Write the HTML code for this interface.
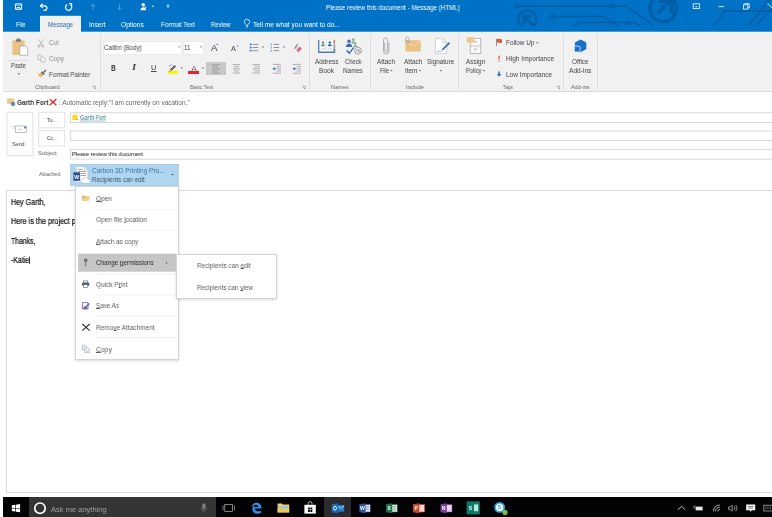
<!DOCTYPE html>
<html><head><meta charset="utf-8">
<style>
*{box-sizing:border-box;margin:0;padding:0}
html,body{width:772px;height:517px;overflow:hidden;background:#fff;font-family:"Liberation Sans",sans-serif}
.a{position:absolute}
.tx{position:absolute;will-change:transform;white-space:nowrap;line-height:1em;transform-origin:0 50%}
svg{position:absolute;left:0;top:0;overflow:hidden;will-change:transform}
.bx{position:absolute;background:#fff;border:1px solid #dcdcdc}
.sep{position:absolute;top:33px;width:1px;height:57px;background:#e1e1e1}
.ms{position:absolute;left:96px;width:80px;height:1px;background:#e6e6e6}
</style></head><body>
<!-- backgrounds -->
<div class="a" style="left:0;top:0;width:772px;height:32px;background:#0072c6"></div>
<svg width="772" height="100" viewBox="0 0 772 100"><rect x="0" y="31.7" width="772" height="59.3" fill="#f1f1f1"/><rect x="40" y="15.8" width="41" height="17" fill="#f1f1f1"/></svg>
<div class="a" style="left:0;top:91px;width:772px;height:1px;background:#dadada"></div>
<!-- ribbon separators -->
<div class="sep" style="left:100px"></div><div class="sep" style="left:309px"></div><div class="sep" style="left:370px"></div>
<div class="sep" style="left:458px"></div><div class="sep" style="left:563px"></div><div class="sep" style="left:597px"></div>
<div class="a" style="left:8px;top:60px;width:21px;height:1px;background:#dedede"></div>
<!-- font boxes -->
<div class="bx" style="left:103px;top:41px;width:79px;height:14px;border-color:#ececec"></div>
<div class="bx" style="left:183px;top:41px;width:21px;height:14px;border-color:#ececec"></div>
<div class="a" style="left:206px;top:62px;width:20px;height:13px;background:#c8c8c8"></div>
<div class="a" style="left:167.5px;top:71.4px;width:10.5px;height:2.6px;background:#fff100"></div>
<div class="a" style="left:188.2px;top:71.4px;width:11.3px;height:2.3px;background:#e3262d"></div>
<!-- compose header boxes -->
<svg width="772" height="200" viewBox="0 0 772 200"><g fill="#fff" stroke="#e2e2e2" stroke-width="1">
<rect x="6.9" y="112.3" width="26" height="43.4"/><rect x="38.7" y="112.3" width="26" height="15.5"/><rect x="38.7" y="130.5" width="26" height="15.5"/></g>
<g fill="#fff" stroke="#d8d8d8" stroke-width="1"><rect x="70.5" y="112.8" width="710" height="9.7"/><rect x="70.5" y="131" width="710" height="9.7"/><rect x="70.5" y="149.4" width="710" height="9.7"/></g></svg>
<div class="a" style="left:70px;top:164px;width:109px;height:22px;background:#b0d5ee;border-top:1px solid #a4cbe8"></div>
<!-- body -->
<div class="a" style="left:6px;top:190px;width:780px;height:303px;border:1px solid #dcdcdc;background:#fff"></div>
<svg width="772" height="300" viewBox="0 0 772 300"><rect x="29.2" y="256.6" width=".8" height="7.4" fill="#111"/></svg>

<svg width="772" height="517" viewBox="0 0 772 517">
<!-- title decoration, clipped to y<26 -->
<clipPath id="tc"><rect x="0" y="0" width="772" height="26"/></clipPath>
<g clip-path="url(#tc)" fill="none" stroke="#005fa9" stroke-width="1.8">
  <circle cx="517" cy="6" r="1.6"/><path d="M518.7 6H610.7"/><circle cx="612.4" cy="6" r="1.6"/><path d="M614.1 6H626l28.5 20"/>
  <circle cx="552.5" cy="16.3" r="1.6"/><path d="M554.2 16.3H604l14.3 10"/>
  <path d="M573 26.5l7-4.1h46.8"/><circle cx="628.5" cy="22.4" r="1.6"/><path d="M630.2 22.4h4l6 4.2"/>
  <path d="M713 27l12-16H772"/><path d="M747.5 27L770 -1"/><path d="M755.5 27L774 5.5"/>
  <circle cx="527.3" cy="19.5" r="9.2" stroke-width="2.6"/><path d="M533 25.2l-8.6-8.6m-.3 7.3v-7.6h7.6" stroke-width="2.9"/>
  <circle cx="663.2" cy="8.3" r="13.2" stroke-width="3.6"/><path d="M657.5 13.7l12-12m-10.5-.7h12.5v12.5" stroke-width="4"/>
</g>
<!-- QAT -->
<g fill="none" stroke="#fff" stroke-width="1" transform="translate(0,.5)">
  <path d="M15.4 3.4h6.2v5.4h-6.2z"/><path d="M17 8.8v-1.8h3v1.8" stroke-width=".9"/><path d="M16.5 3.4v1.6h4v-1.6" stroke-width=".6" stroke="#cfe3f5"/>
  <path d="M40.6 5.3h4a2.3 2.3 0 0 1 0 4.6h-1.2" stroke-width="1.2"/><path d="M42.7 3.2l-2.2 2.1 2.2 2.1" stroke-width="1.2"/>
  <path d="M70.5 4.3a3.1 3.1 0 1 1-3.2-.3" stroke-width="1.250"/><path d="M69 3.1h2.6v2.6" stroke-width="1.1"/>
</g>
<g fill="none" stroke="#4a9bdc" stroke-width="1" transform="translate(0,.5)">
  <path d="M93 9.5v-6m-2.3 2.3l2.3-2.3 2.3 2.3"/>
  <path d="M119.5 3.5v6m-2.3-2.3l2.3 2.3 2.3-2.3"/>
</g>
<g fill="#fff" transform="translate(0,.5)">
  <circle cx="143.2" cy="4.2" r="1.7"/><path d="M140.5 9.8c0-4 5.6-4 5.6 0z"/><path d="M144.5 5.5l1.8 1.2-.6 1.6z"/>
  <path d="M151.8 5.3h2.4l-1.2 1.4z"/>
  <rect x="166.6" y="4.3" width="2.8" height=".8"/><path d="M166.6 5.9h2.8l-1.4 1.5z"/>
</g>
<!-- lightbulb -->
<g fill="none" stroke="#fff" stroke-width=".75"><path d="M246.3 26v-1.3c-1.5-1-1.9-2-1.9-2.9a2.6 2.6 0 0 1 5.2 0c0 .9-.4 1.9-1.9 2.9v1.3z"/><path d="M246.3 27.2h1.4"/></g>
<!-- window controls -->
<g fill="none" stroke="#fff" stroke-width=".8">
  <rect x="693.2" y="3.8" width="6.2" height="4.8"/><path d="M695.3 7l1-1 1 1m-1-1v1.6" stroke-width=".6"/>
  <path d="M718.4 6.6h5.6"/>
  <rect x="743.4" y="4.8" width="4.4" height="4.3"/><path d="M744.8 4.8v-1.2h4.4v4.3h-1.4"/>
  <path d="M767.5 3.4l6 6.2"/>
</g>

<!-- ============ ribbon icons ============ -->
<!-- paste -->
<rect x="12.3" y="40.5" width="12.3" height="14.5" rx=".8" fill="#eac282"/>
<rect x="15.8" y="39.3" width="5.3" height="2.4" rx=".6" fill="#7a7a7a"/><rect x="17.5" y="38.3" width="1.9" height="1.6" fill="#7a7a7a"/>
<path d="M19.8 46h5.6l2.4 2.4v6.8h-8z" fill="#fff" stroke="#8f8f8f" stroke-width=".6"/>
<path d="M17.4 73.2h2.8l-1.4 1.6z" fill="#666"/>
<!-- cut (scissors) -->
<g fill="none" stroke="#a6a6a6" stroke-width=".7"><path d="M38.6 39.4l3.6 5.8M43.4 39.4l-3.6 5.8"/><circle cx="39.1" cy="46.1" r="1.1"/><circle cx="42.9" cy="46.1" r="1.1"/></g>
<!-- copy -->
<g fill="#f1f1f1" stroke="#a9a9a9" stroke-width=".6"><path d="M38 54.8h2.6l1.2 1.2v3.6H38z"/><path d="M40.8 57h2.8l1.4 1.4v3.8h-4.2z"/></g>
<!-- format painter -->
<g transform="translate(0,2.4)"><path d="M38 72.2l3.4-2.6 2.2 2.8-3.4 2.8z" fill="#e8b65c"/><path d="M41.2 69.8l1.2-1 2.3 2.9-1.2 1z" fill="#555"/><path d="M43.4 69.4l2.2-2.4 .8.7-1.8 2.6z" fill="#555"/></g>
<g transform="translate(2.8,0)"><path d="M89.5 86.2h3v3" fill="none" stroke="#888" stroke-width=".6"/><path d="M90.4 87.2l2 2" stroke="#888" stroke-width=".6"/></g>
<!-- font dropdown arrows -->
<g fill="#666"><path d="M178 46.4h2.4l-1.2 1.4z"/><path d="M199.8 46.4h2.4l-1.2 1.4z"/>
<path d="M180.6 67.6h2.2l-1.1 1.3z"/><path d="M202 67.6h2.2l-1.1 1.3z"/>
<path d="M262 46.6h2.2l-1.1 1.3z"/><path d="M283 46.6h2.2l-1.1 1.3z"/></g>
<!-- grow/shrink marks -->
<path d="M217.2 43.6l1 1.4h-2z" fill="#2f6fb5"/><path d="M236.6 45.4h2l-1 1.3z" fill="#2f6fb5"/>
<!-- highlighter pen -->
<g><path d="M169.8 69.5l4.8-4.5 1.5 1.5-4.6 4.6z" fill="#666"/><path d="M168.8 66.3l3-1.6" stroke="#888" stroke-width=".8"/><path d="M169.2 70.2l1.7 1.2h-2.2z" fill="#777"/></g>
<!-- bullets -->
<g fill="#2f6fb5"><rect x="249.8" y="43.6" width="1.8" height="1.6"/><rect x="249.8" y="46.7" width="1.8" height="1.6"/><rect x="249.8" y="49.8" width="1.8" height="1.6"/></g>
<g stroke="#777" stroke-width=".8"><path d="M252.8 44.4h5.4M252.8 47.5h5.4M252.8 50.6h5.4"/></g>
<!-- numbering -->
<g stroke="#2f6fb5" stroke-width=".7"><path d="M271.2 43.4v2M271.2 46.6v2M271.2 49.8v2"/></g>
<g stroke="#777" stroke-width=".8"><path d="M273.6 44.4h5.6M273.6 47.5h5.6M273.6 50.6h5.6"/></g>
<!-- clear formatting -->
<g><path d="M294.5 49.2l2.5-5 1 .3" fill="none" stroke="#666" stroke-width=".8"/><path d="M296.3 50.3l3.5-3.7 2 1.9-3.5 3.7z" fill="#ee5a78"/><path d="M295.5 47h2.4" stroke="#666" stroke-width=".6"/></g>
<!-- align icons -->
<g stroke="#8a8a8a" stroke-width=".65">
 <path d="M212 64.6h8M212 66.7h6M212 68.8h8M212 70.9h6M212 73h8"/>
 <path d="M232.7 64.6h7.4M233.9 66.7h5M232.7 68.8h7.4M233.9 70.9h5M232.7 73h7.4"/>
 <path d="M252.4 64.6h7.6M254.4 66.7h5.6M252.4 68.8h7.6M254.4 70.9h5.6M252.4 73h7.6"/>
 <path d="M272.8 64.4h8.2M276.6 66.6h4.4M276.6 68.8h4.4M276.6 71h4.4M272.8 73.2h8.2"/>
 <path d="M292.8 64.4h8.2M296.6 66.6h4.4M296.6 68.8h4.4M296.6 71h4.4M292.8 73.2h8.2"/>
</g>
<g fill="#2f6fb5"><path d="M272.6 68.8l2-1.7v3.4z"/><rect x="274.3" y="68.3" width="1.7" height="1"/><path d="M296 68.8l-2-1.7v3.4z"/><rect x="292.6" y="68.3" width="1.7" height="1"/></g>
<path d="M302.3 86.2h3v3" fill="none" stroke="#888" stroke-width=".6"/><path d="M303.2 87.2l2 2" stroke="#888" stroke-width=".6"/>
<path d="M556.5 86.2h3v3" fill="none" stroke="#888" stroke-width=".6"/><path d="M557.4 87.2l2 2" stroke="#888" stroke-width=".6"/>
<!-- address book -->
<g><path d="M318.1 40.1h1.5v11.2h15.6v1.6h-17.1z" fill="#4a76b0"/>
 <path d="M319.6 40.2c2.4-1.3 4.9-1.3 6.9 0 2-1.3 4.5-1.3 6.9 0v11.1h-13.8z" fill="#fdfdfd" stroke="#cfd6de" stroke-width=".4"/>
 <path d="M326.5 40.2v11.1" stroke="#b9c4d2" stroke-width=".5"/>
 <rect x="333.5" y="40.3" width="1.7" height="3.1" fill="#d9705a"/><rect x="333.5" y="44.2" width="1.7" height="5" fill="#8faa9a"/><rect x="333.5" y="49.2" width="1.7" height="2.1" fill="#4a76b0"/>
 <circle cx="323" cy="42.6" r="1.250" fill="#5a9a78"/><path d="M321 46.2c0-2.9 4-2.9 4 0z" fill="#5a9a78"/><circle cx="329.8" cy="42.6" r="1.250" fill="#3a6cae"/><path d="M327.8 46.2c0-2.9 4-2.9 4 0z" fill="#3a6cae"/>
 <rect x="321.3" y="48.3" width="3.6" height="1.3" fill="#d6d6d6"/><rect x="328.1" y="48.3" width="3.6" height="1.3" fill="#d6d6d6"/></g>
<!-- check names -->
<g><circle cx="353.3" cy="39.7" r="1.350" fill="#7fb092"/><path d="M351.2 43.6c0-3 4.2-3 4.2 0z" fill="#7fb092"/><circle cx="355.4" cy="43.7" r="1.150" fill="#7fb092"/><path d="M353.6 47c0-2.7 3.7-2.7 3.7 0z" fill="#7fb092"/>
 <circle cx="349" cy="41.3" r="1.7" fill="#3a6cae"/><path d="M345.9 47.1c0-4.8 6.3-4.8 6.3 0z" fill="#3a6cae"/>
 <path d="M346.6 50.2l2.7 3 4.5-5.8" fill="none" stroke="#2f6cb0" stroke-width="1.3"/>
 <circle cx="358" cy="50.7" r="3.4" fill="none" stroke="#777" stroke-width=".65"/><circle cx="357.8" cy="50.7" r="1.250" fill="none" stroke="#777" stroke-width=".55"/><path d="M359.1 49.5v2c.5.8 1.4.5 1.5-.5" fill="none" stroke="#777" stroke-width=".5"/></g>
<!-- paperclip -->
<path d="M384.3 43v7.6a1.7 1.7 0 0 0 3.4 0V40.8a2.5 2.5 0 0 0-5 0v10.4a3.3 3.3 0 0 0 6.6 0V43" fill="none" stroke="#9a9a9a" stroke-width=".85" transform="translate(69.7,-.4) scale(.82,1)"/>
<!-- attach item envelope -->
<g><rect x="405.4" y="40.3" width="15.3" height="11.3" fill="#eac282"/><path d="M405.4 40.5l7.650 5.8 7.650-5.8" fill="none" stroke="#f7e3bf" stroke-width=".8"/>
 <path d="M407 40v2a1 1 0 0 0 2 0v-3.4a1.6 1.6 0 0 0-3.2 0v4" fill="none" stroke="#8a8a8a" stroke-width=".6"/></g>
<!-- signature -->
<g><path d="M435.4 38.6h7.4l4 4v10.8h-11.4z" fill="#fff" stroke="#c0c0c0" stroke-width=".7"/><path d="M442.8 38.6v4h4" fill="none" stroke="#c0c0c0" stroke-width=".7"/>
 <path d="M437 51.2h5" stroke="#3b6fb0" stroke-width=".5"/><path d="M441.6 50.6l.8-2.2 6.4-6.4 1.4 1.4-6.4 6.4z" fill="#4678b4"/></g>
<path d="M439.8 70h2.3l-1.150 1.4z" fill="#666"/>
<path d="M390.3 70h2.3l-1.150 1.4z" fill="#666"/><path d="M418.8 70h2.3l-1.150 1.4z" fill="#666"/><path d="M483 70h2.3l-1.150 1.4z" fill="#666"/><path d="M536 42.3h2.3l-1.150 1.4z" fill="#666"/>
<!-- assign policy -->
<g><rect x="470.2" y="38.4" width="10.6" height="15" fill="#fafafa" stroke="#9d9d9d" stroke-width=".7"/><path d="M470.2 46h10.6M473.9 41.4h3.2M475.5 41.4v1.5M473.9 49h3.2M475.5 49v1.5" fill="none" stroke="#9d9d9d" stroke-width=".6"/>
 <rect x="466.7" y="37.3" width="7.3" height="5.2" fill="#eac282"/><path d="M466.7 37.5l3.650 2.8 3.650-2.8" fill="none" stroke="#f7e3bf" stroke-width=".6"/></g>
<!-- flag / importance -->
<path d="M496.5 38.8v7.4" stroke="#7a7a7a" stroke-width=".8"/><path d="M497 39c2-.8 3 .8 5 0v3.8c-2 .8-3-.8-5 0z" fill="#dc5a3a"/>
<path d="M498.4 55.8h1.3l-.25 4.3h-.8z" fill="#e0492e"/><rect x="498.5" y="60.8" width="1.1" height="1.1" fill="#e0492e"/>
<path d="M498.3 71.4h1.6v2.6h1.5l-2.3 2.7-2.3-2.7h1.5z" fill="#2f6fb5"/>
<!-- office add-ins -->
<g><path d="M580.6 39.4l5.7 3.2v6.4l-5.7 3.2-5.7-3.2v-6.4z" fill="#1470c8"/><rect x="574.3" y="46.2" width="5.8" height="5.8" rx="1.2" fill="#1470c8" stroke="#f1f1f1" stroke-width=".8"/></g>

<!-- ============ header icons ============ -->
<g><rect x="7.2" y="98.4" width="7.2" height="5.4" fill="#eac282"/><path d="M7.2 98.6l3.6 2.7 3.6-2.7" fill="none" stroke="#f7e3bf" stroke-width=".6"/><circle cx="13" cy="104" r="2" fill="#2f6fb5"/><circle cx="13" cy="104" r=".7" fill="#cfe0f3"/></g>
<path d="M49.8 99.2l6.6 6M56.4 99l-6.8 6.3" stroke="#e21c1c" stroke-width="1.2" fill="none"/>
<!-- send icon -->
<g><rect x="15.4" y="126" width="11.2" height="6.6" fill="#fff" stroke="#9a9a9a" stroke-width=".6"/><path d="M12.4 126.6h2.4M13 128.2h1.8" stroke="#9a9a9a" stroke-width=".5"/><path d="M18 129.4h4" stroke="#9a9a9a" stroke-width=".5"/><rect x="24.2" y="126.6" width="1.8" height="1.8" fill="#2f6fb5"/></g>
<!-- attachment icon -->
<g><path d="M76.2 166.5h7.8l3.8 3.8v12h-11.6z" fill="#fff" stroke="#a9b4c0" stroke-width=".5"/><path d="M84 166.5v3.8h3.8" fill="none" stroke="#a9b4c0" stroke-width=".5"/>
 <path d="M77.6 169.4h5.2M77.6 171.5h8.4M80.5 173.5h5.5M80.5 175.5h5.5" stroke="#7c7c7c" stroke-width=".7"/>
 <rect x="73.4" y="172.3" width="6.7" height="8.5" fill="#2b4f8e"/>
 <path d="M82.8 183.3a1.9 1.9 0 0 1 .1-3.8 2.6 2.6 0 0 1 5-.5 2.150 2.150 0 0 1 .5 4.3z" fill="#fff" stroke="#8aa6c8" stroke-width=".45"/></g>
<text x="74.2" y="178.7" font-family="Liberation Sans,sans-serif" font-size="5.2" font-weight="bold" fill="#fff">W</text>
<path d="M171.3 174h2.4l-1.2 1.4z" fill="#444"/>

<path d="M79.6 121H105.3" stroke="#2a7a90" stroke-width=".45"/>
<rect x="72.3" y="114.8" width="5.2" height="5.1" rx=".5" fill="#ffd727"/><circle cx="77" cy="119.3" r=".6" fill="#a060b0"/>

</svg>

<div class="tx" style='left:15.50px;top:21.68px;font-size:6.60px;color:#fff;transform:scaleX(0.894);'>File</div>
<div class="tx" style='left:47.80px;top:21.68px;font-size:6.60px;color:#2b6cb0;transform:scaleX(0.942);'>Message</div>
<div class="tx" style='left:89.30px;top:21.68px;font-size:6.60px;color:#fff;transform:scaleX(0.982);'>Insert</div>
<div class="tx" style='left:121.30px;top:21.68px;font-size:6.60px;color:#fff;'>Options</div>
<div class="tx" style='left:160.50px;top:21.68px;font-size:6.60px;color:#fff;transform:scaleX(0.980);'>Format Text</div>
<div class="tx" style='left:210.50px;top:21.68px;font-size:6.60px;color:#fff;transform:scaleX(0.892);'>Review</div>
<div class="tx" style='left:252.80px;top:21.68px;font-size:6.60px;color:#fff;'>Tell me what you want to do...</div>
<div class="tx" style='left:326.00px;top:4.53px;font-size:6.60px;color:#fff;transform:scaleX(0.952);'>Please review this document - Message (HTML)</div>
<div class="tx" style='left:11.40px;top:62.95px;font-size:6.40px;color:#444;transform:scaleX(0.912);'>Paste</div>
<div class="tx" style='left:49.00px;top:40.05px;font-size:6.40px;color:#8c8c8c;transform:scaleX(0.954);'>Cut</div>
<div class="tx" style='left:49.00px;top:56.05px;font-size:6.40px;color:#8c8c8c;'>Copy</div>
<div class="tx" style='left:49.00px;top:71.65px;font-size:6.40px;color:#444;transform:scaleX(0.970);'>Format Painter</div>
<div class="tx" style='left:35.00px;top:85.44px;font-size:5.90px;color:#666;transform:scaleX(0.975);'>Clipboard</div>
<div class="tx" style='left:104.00px;top:45.25px;font-size:6.40px;color:#444;transform:scaleX(0.979);'>Calibri (Body)</div>
<div class="tx" style='left:184.30px;top:45.25px;font-size:6.40px;color:#444;'>11</div>
<div class="tx" style='left:110.80px;top:63.67px;font-size:8.40px;color:#444;font-weight:bold;transform:scaleX(0.775);'>B</div>
<div class="tx" style='left:131.60px;top:64.09px;font-size:8.20px;color:#444;font-weight:bold;font-family:"Liberation Serif",serif;font-style:italic;transform:scaleX(1.318);'>I</div>
<div class="tx" style='left:150.70px;top:63.74px;font-size:7.60px;color:#444;text-decoration:underline;text-decoration-thickness:.7px;text-underline-offset:1px;transform:scaleX(0.966);'>U</div>
<div class="tx" style='left:190.80px;top:65.07px;font-size:8.40px;color:#555;transform:scaleX(1.108);'>A</div>
<div class="tx" style='left:210.60px;top:43.25px;font-size:9.80px;color:#444;transform:scaleX(0.932);'>A</div>
<div class="tx" style='left:231.40px;top:45.06px;font-size:7.40px;color:#444;transform:scaleX(0.932);'>A</div>
<div class="tx" style='left:189.50px;top:85.44px;font-size:5.90px;color:#666;transform:scaleX(0.864);'>Basic Text</div>
<div class="tx" style='left:315.00px;top:59.35px;font-size:6.40px;color:#444;'>Address</div>
<div class="tx" style='left:319.00px;top:67.65px;font-size:6.40px;color:#444;transform:scaleX(1.029);'>Book</div>
<div class="tx" style='left:345.00px;top:59.35px;font-size:6.40px;color:#444;transform:scaleX(0.910);'>Check</div>
<div class="tx" style='left:343.40px;top:67.65px;font-size:6.40px;color:#444;transform:scaleX(0.968);'>Names</div>
<div class="tx" style='left:331.00px;top:85.44px;font-size:5.90px;color:#666;transform:scaleX(0.943);'>Names</div>
<div class="tx" style='left:377.00px;top:59.35px;font-size:6.40px;color:#444;'>Attach</div>
<div class="tx" style='left:379.50px;top:67.65px;font-size:6.40px;color:#444;transform:scaleX(0.873);'>File</div>
<div class="tx" style='left:403.60px;top:59.35px;font-size:6.40px;color:#444;transform:scaleX(1.015);'>Attach</div>
<div class="tx" style='left:404.50px;top:67.65px;font-size:6.40px;color:#444;transform:scaleX(0.965);'>Item</div>
<div class="tx" style='left:427.40px;top:59.35px;font-size:6.40px;color:#444;'>Signature</div>
<div class="tx" style='left:406.20px;top:85.44px;font-size:5.90px;color:#666;transform:scaleX(0.937);'>Include</div>
<div class="tx" style='left:466.00px;top:59.35px;font-size:6.40px;color:#444;'>Assign</div>
<div class="tx" style='left:465.60px;top:67.65px;font-size:6.40px;color:#444;transform:scaleX(0.903);'>Policy</div>
<div class="tx" style='left:505.80px;top:40.05px;font-size:6.40px;color:#444;'>Follow Up</div>
<div class="tx" style='left:505.80px;top:56.05px;font-size:6.40px;color:#444;transform:scaleX(1.028);'>High Importance</div>
<div class="tx" style='left:505.80px;top:71.65px;font-size:6.40px;color:#444;transform:scaleX(1.016);'>Low Importance</div>
<div class="tx" style='left:502.70px;top:85.44px;font-size:5.90px;color:#666;transform:scaleX(0.795);'>Tags</div>
<div class="tx" style='left:572.00px;top:59.35px;font-size:6.40px;color:#444;'>Office</div>
<div class="tx" style='left:569.00px;top:67.65px;font-size:6.40px;color:#444;transform:scaleX(1.034);'>Add-ins</div>
<div class="tx" style='left:571.00px;top:85.44px;font-size:5.90px;color:#666;transform:scaleX(0.936);'>Add-ins</div>
<div class="tx" style='left:17.20px;top:98.52px;font-size:7.30px;color:#333;font-weight:bold;transform:scaleX(0.880);'>Garth Fort</div>
<div class="tx" style='left:59.00px;top:99.89px;font-size:6.50px;color:#666;'>: Automatic reply:"I am currently on vacation."</div>
<div class="tx" style='left:12.30px;top:140.76px;font-size:6.20px;color:#444;transform:scaleX(0.872);'>Send</div>
<div class="tx" style='left:47.30px;top:118.20px;font-size:5.80px;color:#333;transform:scaleX(0.884);'>To...</div>
<div class="tx" style='left:47.30px;top:136.40px;font-size:5.80px;color:#333;transform:scaleX(0.814);'>Cc...</div>
<div class="tx" style='left:38.20px;top:151.44px;font-size:5.90px;color:#666;transform:scaleX(0.956);'>Subject</div>
<div class="tx" style='left:39.00px;top:172.46px;font-size:5.70px;color:#666;transform:scaleX(0.962);'>Attached</div>
<div class="tx" style='left:79.60px;top:114.56px;font-size:6.90px;color:#2a7a90;transform:scaleX(0.818);'>Garth Fort</div>
<div class="tx" style='left:72.00px;top:151.94px;font-size:5.90px;color:#111;transform:scaleX(0.950);'>Please review this document</div>
<div class="tx" style='left:91.70px;top:168.49px;font-size:6.50px;color:#3675b2;'>Carbon 3D Printing Pro...</div>
<div class="tx" style='left:91.70px;top:177.39px;font-size:6.50px;color:#38567a;transform:scaleX(0.961);'>Recipients can edit</div>
<div class="tx" style='left:10.80px;top:197.67px;font-size:8.30px;color:#111;-webkit-text-stroke:.22px #111;transform:scaleX(0.857);'>Hey Garth,</div>
<div class="tx" style='left:10.80px;top:216.67px;font-size:8.30px;color:#111;-webkit-text-stroke:.22px #111;transform:scaleX(0.871);'>Here is the project p</div>
<div class="tx" style='left:10.80px;top:236.57px;font-size:8.30px;color:#111;-webkit-text-stroke:.22px #111;transform:scaleX(0.827);'>Thanks,</div>
<div class="tx" style='left:10.80px;top:255.87px;font-size:8.30px;color:#111;-webkit-text-stroke:.22px #111;transform:scaleX(0.835);'>-Katie</div>

<!-- menus -->
<div class="a" style="left:75px;top:186px;width:104px;height:174px;background:#fff;border:1px solid #d4d4d4;box-shadow:0 1px 2.5px rgba(0,0,0,.16)"></div>
<div class="a" style="left:176px;top:254px;width:101px;height:45px;background:#fff;border:1px solid #d4d4d4;box-shadow:0 1px 2.5px rgba(0,0,0,.16)"></div>
<svg width="772" height="517" viewBox="0 0 772 517"><rect x="78.1" y="253.6" width="97.9" height="18.1" fill="#c6c6c6"/>
<g stroke-width="1"><path stroke="#f7f7f7" d="M96 209.6h80M96 230.5h80"/><path stroke="#efefef" d="M96 274h80M96 295h80M96 316.2h80M96 337.5h80"/></g></svg>
<svg width="772" height="517" viewBox="0 0 772 517">
<!-- open folder -->
<path d="M82.2 201v-5.2h2.6l.8.9h3.4v1" fill="#e8b65c" stroke="#e8b65c" stroke-width=".3"/><path d="M82.2 201l1.6-3.4h6.4l-1.6 3.4z" fill="#f2cf8a"/>
<!-- key/pin -->
<circle cx="85.7" cy="260.3" r="1.7" fill="#555"/><circle cx="85.7" cy="260.1" r=".6" fill="#c6c6c6"/><path d="M85.7 261.5v5" stroke="#555" stroke-width=".8" fill="none"/>
<path d="M166 261.7l1.4 1.2-1.4 1.2z" fill="#555"/>
<!-- printer -->
<g><rect x="83.6" y="280.9" width="4.2" height="2" fill="#fff" stroke="#5a6a7a" stroke-width=".6"/><rect x="82.1" y="282.8" width="7.2" height="3" rx=".6" fill="#4a5a6c"/><rect x="83.6" y="284.8" width="4.2" height="2.6" fill="#fff" stroke="#5a6a7a" stroke-width=".6"/></g>
<!-- save as -->
<g><path d="M82.4 302.6h5.6v6.4h-5.6z" fill="#fff" stroke="#7a4fa0" stroke-width=".8"/><rect x="83.6" y="306.4" width="3.2" height="2.6" fill="#7a4fa0"/><path d="M85.4 306.8l3.4-3.8 1 1-3.4 3.8-1.4.4z" fill="#3b78c2"/></g>
<!-- remove X -->
<path d="M82.3 324l7.4 6.6M89.7 324l-7.4 6.6" stroke="#333" stroke-width="1.150" fill="none"/>
<!-- copy -->
<g fill="#fff" stroke="#8a9ab0" stroke-width=".6"><path d="M82.4 345.2h2.8l1.2 1.2v3.6h-4z"/><path d="M85 347.8h2.8l1.4 1.4v3.4H85z"/></g>
<path d="M83.2 347.4h2M83.2 348.8h1.4M86 350.2h2.2M86 351.6h2.2" stroke="#8a9ab0" stroke-width=".4"/>

</svg>
<div class="tx" style='left:96.10px;top:195.03px;font-size:7.30px;color:#5e5e5e;text-decoration-thickness:.5px;text-underline-offset:.3px;text-decoration-color:rgba(90,90,90,.55);transform:scaleX(0.890);'><u>O</u>pen</div>
<div class="tx" style='left:96.10px;top:216.13px;font-size:7.30px;color:#5e5e5e;text-decoration-thickness:.5px;text-underline-offset:.3px;text-decoration-color:rgba(90,90,90,.55);transform:scaleX(0.903);'>Open file <u>l</u>ocation</div>
<div class="tx" style='left:96.10px;top:237.73px;font-size:7.30px;color:#5e5e5e;text-decoration-thickness:.5px;text-underline-offset:.3px;text-decoration-color:rgba(90,90,90,.55);transform:scaleX(0.881);'><u>A</u>ttach as copy</div>
<div class="tx" style='left:96.10px;top:259.43px;font-size:7.30px;color:#2a2a2a;text-decoration-thickness:.5px;text-underline-offset:.3px;text-decoration-color:rgba(90,90,90,.55);transform:scaleX(0.867);'>Change <u>p</u>ermissions</div>
<div class="tx" style='left:96.00px;top:281.33px;font-size:7.30px;color:#5e5e5e;text-decoration-thickness:.5px;text-underline-offset:.3px;text-decoration-color:rgba(90,90,90,.55);transform:scaleX(0.885);'>Quick P<u>r</u>int</div>
<div class="tx" style='left:96.00px;top:302.43px;font-size:7.30px;color:#5e5e5e;text-decoration-thickness:.5px;text-underline-offset:.3px;text-decoration-color:rgba(90,90,90,.55);transform:scaleX(0.859);'><u>S</u>ave As</div>
<div class="tx" style='left:96.00px;top:324.23px;font-size:7.30px;color:#5e5e5e;text-decoration-thickness:.5px;text-underline-offset:.3px;text-decoration-color:rgba(90,90,90,.55);transform:scaleX(0.892);'>Remo<u>v</u>e Attachment</div>
<div class="tx" style='left:96.00px;top:346.03px;font-size:7.30px;color:#5e5e5e;text-decoration-thickness:.5px;text-underline-offset:.3px;text-decoration-color:rgba(90,90,90,.55);transform:scaleX(0.933);'><u>C</u>opy</div>
<div class="tx" style='left:196.60px;top:262.43px;font-size:7.30px;color:#5e5e5e;text-decoration-thickness:.5px;text-underline-offset:.3px;text-decoration-color:rgba(90,90,90,.55);transform:scaleX(0.872);'>Recipients can <u>e</u>dit</div>
<div class="tx" style='left:196.60px;top:283.83px;font-size:7.30px;color:#5e5e5e;text-decoration-thickness:.5px;text-underline-offset:.3px;text-decoration-color:rgba(90,90,90,.55);transform:scaleX(0.865);'>Recipients can <u>v</u>iew</div>

<!-- taskbar -->
<div class="a" style="left:0;top:497px;width:772px;height:20px;background:#030306"></div>
<div class="a" style="left:29px;top:497px;width:187px;height:20px;background:#343434"></div>
<div class="a" style="left:324px;top:497px;width:27px;height:20px;background:#2b2b2e"></div>
<svg width="772" height="517" viewBox="0 0 772 517">
<!-- windows logo -->
<g fill="#fff" transform="translate(0,-.4)"><path d="M11.8 505.7l3.4-.5v3.1h-3.4zM15.8 505.1l4.3-.6v3.8h-4.3zM11.8 508.9h3.4v3.1l-3.4-.5zM15.8 508.9h4.3v3.8l-4.3-.6z"/></g>
<!-- cortana -->
<circle cx="40" cy="508.2" r="5.2" fill="none" stroke="#fff" stroke-width="1.7"/>
<!-- mic -->
<g fill="none" stroke="#808080" stroke-width=".7"><rect x="202.6" y="503.8" width="2.6" height="5" rx="1.3" fill="#808080"/><path d="M201.3 507.6c0 3.6 5.2 3.6 5.2 0M203.9 510.4v2"/></g>
<!-- task view -->
<g fill="none" stroke="#cfcfcf" stroke-width=".6"><rect x="224.8" y="504.4" width="7.8" height="7"/><path d="M223 505.4v5M234.4 505.4v5"/></g>
<!-- edge -->
<g><path d="M251.4 507.6c.6-6.8 10.4-6.6 10.2 1h-6.8c.2 3 4 3.4 6.4 1.8v2.3c-4 2.2-8.8.6-8.8-4 0-2 1.4-3.6 3-4.2-1 .9-1.4 1.7-1.5 2.5h4.3c0-3-5.2-3.2-6.8.6z" fill="#2f8eea"/></g>
<!-- folder -->
<g><path d="M277.6 503.4h4.2l1 1.2h6.4v7.8h-11.6z" fill="#f5d36a"/><rect x="278.6" y="506" width="9.6" height="5.4" fill="#8cc8ee"/><path d="M277.6 512.4v-4.6h11.6v4.6z" fill="#f0c850" opacity=".85"/></g>
<!-- store -->
<g><path d="M304.4 504.8h11.4v8.8h-11.4z" fill="#fff"/><path d="M308.2 504.8v-1.3a1.9 1.9 0 0 1 3.8 0v1.3" fill="none" stroke="#fff" stroke-width=".7"/><path d="M308 507.6h1.9v1.9H308zM310.4 507.6h1.9v1.9h-1.9zM308 510h1.9v1.9H308zM310.4 510h1.9v1.9h-1.9z" fill="#030306"/></g>
<!-- outlook -->
<g><rect x="336.6" y="505" width="7.6" height="6.6" fill="#2a7ad0"/><path d="M337.6 505.8l3.2 2.6 3.2-2.6" fill="none" stroke="#fff" stroke-width=".7"/><path d="M331.8 504.2l6.4-1v10l-6.4-1z" fill="#0f6cc4"/><ellipse cx="335" cy="508.2" rx="1.5" ry="1.9" fill="none" stroke="#fff" stroke-width=".9"/></g>
<!-- word -->
<g><rect x="364" y="504.6" width="6.2" height="7.4" fill="#fff" stroke="#2b579a" stroke-width=".6"/><path d="M365.6 506.4h3.6M365.6 508.2h3.6M365.6 510h3.6" stroke="#2b579a" stroke-width=".6"/><path d="M359.3 504.2l6.3-1v10l-6.3-1z" fill="#2b579a"/></g>
<!-- excel -->
<g><rect x="391" y="504.6" width="6.2" height="7.4" fill="#fff" stroke="#1e7145" stroke-width=".6"/><path d="M392.6 506.4h3.6M392.6 508.2h3.6M392.6 510h3.6" stroke="#1e7145" stroke-width=".6"/><path d="M386 504.2l6.3-1v10l-6.3-1z" fill="#1e7145"/></g>
<!-- powerpoint -->
<g><rect x="418" y="504.6" width="6.6" height="7.4" fill="#f6d7cd" stroke="#d04423" stroke-width=".6"/><path d="M413 504.2l6.3-1v10l-6.3-1z" fill="#d04423"/></g>
<!-- onenote -->
<g><rect x="445.6" y="504.6" width="6.4" height="7.4" fill="#e8d6f0" stroke="#7d3b9b" stroke-width=".6"/><path d="M440.5 504.2l6.3-1v10l-6.3-1z" fill="#7d3b9b"/></g>
<!-- sharepoint/sway teal -->
<g><rect x="466.6" y="501.4" width="13.2" height="13" fill="#0b7a6a"/><rect x="474" y="504.4" width="4.2" height="6.8" fill="#bfe6dd"/></g>
<!-- skype -->
<g><circle cx="499.6" cy="507.4" r="5.4" fill="#2aa8ea"/><circle cx="499.6" cy="507.4" r="3.6" fill="#fff"/><circle cx="505" cy="512.4" r="2.6" fill="#7cbb3c"/></g>

<g font-family="Liberation Sans,sans-serif" font-weight="bold" font-size="5.2" fill="#fff" text-anchor="middle">
<text x="362.4" y="510.1">W</text><text x="389.2" y="510.1">X</text><text x="416.2" y="510.1">P</text><text x="443.7" y="510.1">N</text><text x="470.6" y="510.2">S</text>
</g>
<text x="499.6" y="509.3" font-family="Liberation Sans,sans-serif" font-weight="bold" font-size="5.4" fill="#2aa8ea" text-anchor="middle">S</text>
<!-- tray -->
<g fill="none" stroke="#e8e8e8" stroke-width=".8"><path d="M677.8 509.8l3.7-3.5 3.7 3.5"/></g>
<g><rect x="695.6" y="506.6" width="7" height="3.8" fill="#e8e8e8"/><path d="M694 506.2v2.4M695 505.4v1" stroke="#e8e8e8" stroke-width=".7"/></g>
<g fill="none" stroke="#d8d8d8" stroke-width=".8"><path d="M713.4 511.4a6.4 6.4 0 0 1 6.4-6.4M715.6 511.4a4.2 4.2 0 0 1 4.2-4.2M717.8 511.4a2 2 0 0 1 2-2"/></g>
<g><path d="M728.6 507h1.6l2-1.8v6l-2-1.8h-1.6z" fill="none" stroke="#e0e0e0" stroke-width=".6"/><path d="M734 506.2a2.8 2.8 0 0 1 0 4M735.6 505a4.6 4.6 0 0 1 0 6.4" fill="none" stroke="#e0e0e0" stroke-width=".6"/></g>
<g><path d="M746.2 504.4h9v5.8h-3.4l-1.1 1.6-1.1-1.6h-3.4z" fill="#fff"/><path d="M748 506.4h5.4M748 508h5.4" stroke="#030306" stroke-width=".5"/></g>
<g><rect x="763.8" y="505.2" width="9" height="5.8" fill="none" stroke="#bdbdbd" stroke-width=".7"/><path d="M765.2 507h6M765.2 508.6h6" stroke="#bdbdbd" stroke-width=".6" stroke-dasharray="1 .6"/></g>

</svg>
<div class="tx" style='left:51.30px;top:506.51px;font-size:6.80px;color:#a2a2a2;transform:scaleX(1.108);'>Ask me anything</div>
<div class="a" style="left:0;top:0;width:3px;height:517px;background:#fff"></div>
</body></html>
